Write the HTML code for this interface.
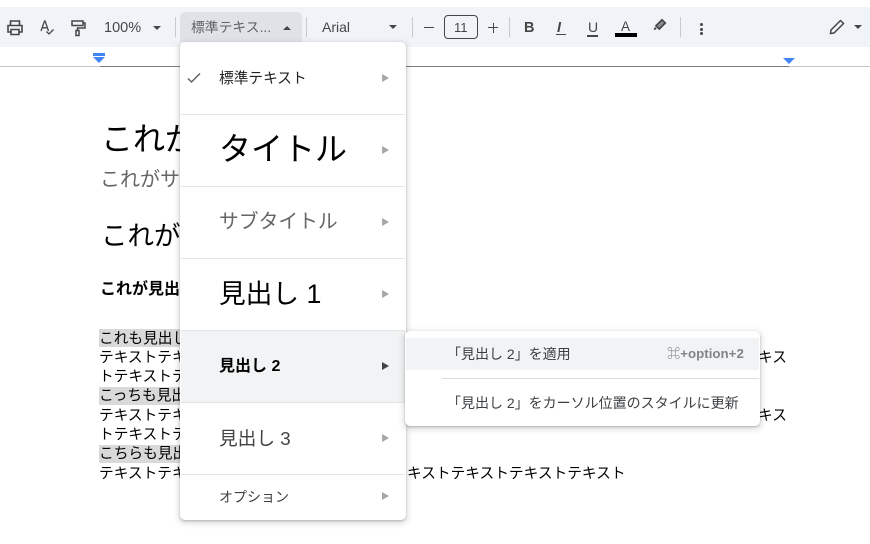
<!DOCTYPE html>
<html lang="ja"><head><meta charset="utf-8">
<style>
html,body{margin:0;padding:0;background:#fff}
body{width:870px;height:544px;overflow:hidden;position:relative;font-family:"Liberation Sans","Noto Sans CJK JP",sans-serif;color:#000}
.t{position:absolute;white-space:nowrap;line-height:1}
.a{position:absolute}
.sep{position:absolute;width:1px;height:20px;top:17px;background:#c7c9cc}
.tb{color:#444746}
.line{position:absolute;left:181px;width:224px;height:1px;background:#e4e5e6}
.arr{position:absolute;left:382px;width:0;height:0;border-left:7px solid #a5a7a9;border-top:4px solid transparent;border-bottom:4px solid transparent}
.car{position:absolute;width:0;height:0;border-left:4.5px solid transparent;border-right:4.5px solid transparent;border-top:4.5px solid #444746}
.hl{position:absolute;left:99px;width:90px;height:18px;background:#d9d9d9}
.b{font-size:14.7px;left:99px}
</style></head><body>
<div class="a" style="left:0;top:7px;width:870px;height:40px;background:#f0f4f9"></div>
<div class="a" style="left:0;top:66px;width:100px;height:1px;background:#c4c4c4"></div>
<div class="a" style="left:100px;top:66px;width:689px;height:1px;background:#7a7a7a"></div>
<div class="a" style="left:789px;top:66px;width:81px;height:1px;background:#c4c4c4"></div>
<div class="a" style="left:93px;top:53px;width:12px;height:3px;background:#4285f4"></div>
<div class="a" style="left:93px;top:57px;width:0;height:0;border-left:6px solid transparent;border-right:6px solid transparent;border-top:6px solid #4285f4"></div>
<div class="a" style="left:783px;top:58px;width:0;height:0;border-left:6px solid transparent;border-right:6px solid transparent;border-top:6px solid #4285f4"></div>

<svg class="a" style="left:6px;top:19px" width="18" height="18" viewBox="0 0 18 18" fill="none" stroke="#444746" stroke-width="1.6"><path d="M4.5 6V2h9v4M4.500 13H2V6.500h14V13h-2.500"/><path d="M5 10.500h8V15.500H5z"/></svg>
<svg class="a" style="left:39px;top:19px" width="18" height="18" viewBox="0 0 18 18" fill="none" stroke="#444746" stroke-width="1.300"><path d="M2 12L5.500 2h.6L9.500 12M3.200 8.800h5"/><path d="M7.500 12.500l2.500 2.500 4.500-4.500"/></svg>
<svg class="a" style="left:70px;top:19px" width="16" height="18" viewBox="0 0 16 18" fill="none" stroke="#444746" stroke-width="1.500"><path d="M2 2h11v4.500H2zM13 4h2v5H7.500v2.500"/><path d="M6 11.500h3v5H6z"/></svg>
<div class="t tb" style="left:104px;top:21px;font-size:14.500px;">100%</div>
<div class="car" style="left:153px;top:26px"></div>
<div class="sep" style="left:175px"></div>

<div class="a" style="left:180px;top:12px;width:122px;height:30px;border-radius:5px 5px 0 0;background:#dfe3e8"></div>
<div class="t" style="left:191px;top:21px;font-size:13.800px;color:#5f6368">標準テキス...</div>
<div class="a" style="left:283px;top:26px;width:0;height:0;border-left:4.500px solid transparent;border-right:4.500px solid transparent;border-bottom:4.500px solid #444746"></div>
<div class="sep" style="left:306px"></div>
<div class="t tb" style="left:322px;top:20px;font-size:14px">Arial</div>
<div class="car" style="left:389px;top:25px"></div>
<div class="sep" style="left:412px"></div>
<div class="a" style="left:424px;top:27px;width:10px;height:1px;background:#444746"></div>
<div class="a" style="left:444px;top:15px;width:32px;height:22px;border:1px solid #444746;border-radius:4px"></div>
<div class="t tb" style="left:454px;top:21px;font-size:13px">11</div>
<div class="a" style="left:488px;top:27px;width:10px;height:1px;background:#444746"></div>
<div class="a" style="left:492.500px;top:22.500px;width:1px;height:10px;background:#444746"></div>
<div class="sep" style="left:509px"></div>
<div class="t tb" style="left:524px;top:21px;font-size:14.500px;font-weight:700">B</div>
<div class="t tb" style="left:557px;top:21px;font-size:14.500px;font-weight:700;font-style:italic">I</div>
<div class="a" style="left:556px;top:34px;width:10px;height:1px;background:#444746"></div>
<div class="t tb" style="left:588px;top:20px;font-size:14px">U</div>
<div class="a" style="left:587px;top:35px;width:11px;height:1.500px;background:#444746"></div>
<div class="t tb" style="left:621px;top:20px;font-size:13.500px">A</div>
<div class="a" style="left:615px;top:33px;width:22px;height:4px;background:#000"></div>
<svg class="a" style="left:652px;top:17px" width="16" height="16" viewBox="0 0 16 16"><path d="M1.500 12.800l2.200-.1 1-1.100-1.700-1.800z" fill="#444746"/><path d="M4 8.800l3.300 3.200 6-6-3.300-3.200z" fill="#8a8d8f" stroke="#444746" stroke-width="1.700"/></svg>
<div class="sep" style="left:680px"></div>
<div class="a" style="left:699.500px;top:23px;width:3px;height:3px;border-radius:50%;background:#444746"></div>
<div class="a" style="left:699.500px;top:27.500px;width:3px;height:3px;border-radius:50%;background:#444746"></div>
<div class="a" style="left:699.500px;top:32px;width:3px;height:3px;border-radius:50%;background:#444746"></div>
<svg class="a" style="left:829px;top:19px" width="16" height="16" viewBox="0 0 16 16" fill="none" stroke="#444746" stroke-width="1.500"><path d="M1.500 14.500l.5-3.500L11.500 1.500l3 3L5 14z"/></svg>
<div class="car" style="left:854px;top:25px"></div>

<div class="t" style="left:101px;top:123px;font-size:32px">これが</div>
<div class="t" style="left:100px;top:170px;font-size:20px;color:#666">これがサ</div>
<div class="t" style="left:101px;top:223px;font-size:26.500px">これが</div>
<div class="t" style="left:100px;top:282px;font-size:16px;font-weight:700">これが見出</div>

<div class="hl" style="top:329px"></div>
<div class="hl" style="top:387px"></div>
<div class="hl" style="top:445px"></div>
<div class="t b" style="top:332px">これも見出し</div>
<div class="t b" style="top:351px">テキストテキ</div>
<div class="t b" style="top:370px">トテキストテ</div>
<div class="t b" style="top:389px">こっちも見出</div>
<div class="t b" style="top:409px">テキストテキ</div>
<div class="t b" style="top:428px">トテキストテ</div>
<div class="t b" style="top:447px">こちらも見出</div>
<div class="t b" style="top:467px">テキストテキ</div>
<div class="t" style="left:758px;top:351px;font-size:14.700px">キス</div>
<div class="t" style="left:758px;top:409px;font-size:14.700px">キス</div>
<div class="t" style="left:407px;top:467px;font-size:14.700px">キストテキストテキストテキスト</div>

<div class="a" style="left:180px;top:42px;width:226px;height:478px;background:#fff;border-radius:5px;box-shadow:0 2px 6px 2px rgba(60,64,67,.15),0 1px 2px rgba(60,64,67,.3)"></div>
<div class="a" style="left:181px;top:331px;width:224px;height:72px;background:#f1f3f4"></div>
<div class="line" style="top:114px"></div>
<div class="line" style="top:186px"></div>
<div class="line" style="top:258px"></div>
<div class="line" style="top:330px"></div>
<div class="line" style="top:402px"></div>
<div class="line" style="top:474px"></div>
<svg class="a" style="left:187px;top:72px" width="14" height="12" viewBox="0 0 14 12" fill="none" stroke="#5f6368" stroke-width="1.500"><path d="M1 6.500l3.500 3.500L13 1.500"/></svg>
<div class="t" style="left:219px;top:70px;font-size:14.700px;color:#202124;margin-top:2px">標準テキスト</div>
<div class="t" style="left:219px;top:133px;font-size:32px;">タイトル</div>
<div class="t" style="left:219px;top:213px;font-size:19.800px;color:#666">サブタイトル</div>
<div class="t" style="left:219px;top:281px;font-size:26.700px">見出し 1</div>
<div class="t" style="left:219px;top:359px;font-size:16px;font-weight:700">見出し 2</div>
<div class="t" style="left:219px;top:430px;font-size:18.700px;color:#434343">見出し 3</div>
<div class="t" style="left:219px;top:490px;font-size:14px;color:#3c4043">オプション</div>
<div class="arr" style="top:74px"></div>
<div class="arr" style="top:146px"></div>
<div class="arr" style="top:218px"></div>
<div class="arr" style="top:290px"></div>
<div class="arr" style="top:362px;border-left-color:#444"></div>
<div class="arr" style="top:434px"></div>
<div class="arr" style="top:492px"></div>

<div class="a" style="left:405px;top:331px;width:355px;height:95px;background:#fff;border-radius:5px;box-shadow:0 2px 6px 2px rgba(60,64,67,.15),0 1px 2px rgba(60,64,67,.3)"></div>
<div class="a" style="left:406px;top:338px;width:353px;height:32px;background:#f1f3f4"></div>
<div class="a" style="left:442px;top:378px;width:317px;height:1px;background:#dadce0"></div>
<div class="t" style="left:447px;top:347px;font-size:14px;color:#3c4043">「見出し 2」を適用</div>
<div class="t" style="left:667px;top:347px;font-size:13.300px;font-weight:700;color:#80868b">⌘+option+2</div>
<div class="t" style="left:447px;top:396px;font-size:14px;color:#3c4043">「見出し 2」をカーソル位置のスタイルに更新</div>
</body></html>
